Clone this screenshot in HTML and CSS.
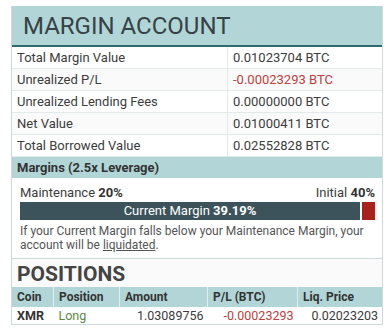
FILE: index.html
```html
<!DOCTYPE html>
<html lang="en">
<head>
  <meta charset="UTF-8">
  <meta name="viewport" content="width=device-width, initial-scale=1.0">
  <title>Margin Account</title>
  <link rel="stylesheet" href="styles.css">
</head>
<body>
  <div class="panel">
    <div class="panel-head">
      <h2>MARGIN ACCOUNT</h2>
    </div>

    <table class="summary">
      <tr><td>Total Margin Value</td><td>0.01023704 BTC</td></tr>
      <tr><td>Unrealized P/L</td><td class="neg">-0.00023293 BTC</td></tr>
      <tr><td>Unrealized Lending Fees</td><td>0.00000000 BTC</td></tr>
      <tr><td>Net Value</td><td>0.01000411 BTC</td></tr>
      <tr><td>Total Borrowed Value</td><td>0.02552828 BTC</td></tr>
    </table>

    <div class="sub-head">Margins (2.5x Leverage)</div>

    <div class="margins">
      <div class="margin-labels">
        <span>Maintenance <b>20%</b></span>
        <span>Initial <b>40%</b></span>
      </div>
      <div class="margin-bar">
        <div class="bar-fill">Current Margin <b>39.19%</b></div>
        <div class="bar-rest"></div>
      </div>
      <p class="note">If your Current Margin falls below your Maintenance Margin, your account will be <a href="#">liquidated</a>.</p>
    </div>

    <div class="positions-head">POSITIONS</div>

    <table class="positions">
      <thead>
        <tr>
          <th class="c-coin">Coin</th>
          <th class="c-pos">Position</th>
          <th class="c-amt">Amount</th>
          <th class="c-pl">P/L (BTC)</th>
          <th>Liq. Price</th>
        </tr>
      </thead>
      <tbody>
        <tr>
          <td class="coin">XMR</td>
          <td class="long">Long</td>
          <td class="num">1.03089756</td>
          <td class="num neg">-0.00023293</td>
          <td class="num">0.02023203</td>
        </tr>
      </tbody>
    </table>
  </div>
</body>
</html>
```

FILE: styles.css
```css
body {
  margin: 0;
  background-color: #fff;
  font-family: 'Roboto', 'Liberation Sans', sans-serif;
  color: #3a3a3a;
}
.panel {
  width: 370px;
  margin: 6px 0 0 11px;
  border: 1px solid #cdd9d9;
  border-top: none;
}
.panel-head {
  background-color: #b2d6d7;
  border-bottom: 2px solid #2c6b6f;
  height: 39px;
  padding-left: 11px;
}
.panel-head h2 {
  margin: 0;
  font-weight: normal;
  font-size: 24px;
  line-height: 40px;
  color: #374246;
}
table {
  border-collapse: collapse;
  width: 100%;
}
.summary td {
  font-size: 13px;
  height: 21px;
  padding: 0 5px;
  border-bottom: 1px solid #e4e9e9;
  color: #3c3c3c;
}
.summary td:first-child {
  width: 205px;
  border-right: 1px solid #e4e9e9;
}
.summary tr:nth-child(even) td {
  background-color: #fafafa;
}
.summary td.neg {
  color: #c0403c;
}
.sub-head {
  background-color: #b2d6d7;
  font-size: 13px;
  font-weight: bold;
  height: 21px;
  line-height: 21px;
  padding-left: 5px;
  color: #333;
}
.margins {
  padding: 7px 7px 6px 8px;
  border-bottom: 1px solid #cdd9d9;
}
.margin-labels {
  display: flex;
  justify-content: space-between;
  font-size: 13px;
  line-height: 16px;
  color: #3c3c3c;
}
.margin-labels b {
  color: #333;
}
.margin-bar {
  display: flex;
  gap: 2px;
  height: 18px;
  margin-top: 1px;
}
.bar-fill {
  flex: 1;
  background-color: #3d535b;
  color: #fff;
  font-size: 13px;
  line-height: 18px;
  text-align: center;
}
.bar-rest {
  width: 13px;
  background-color: #a8211c;
}
.note {
  margin: 4px 0 0;
  font-size: 12px;
  line-height: 14px;
  color: #555;
}
.note a {
  color: #555;
}
.positions-head {
  font-size: 21px;
  font-weight: bold;
  color: #444;
  height: 28px;
  line-height: 30px;
  padding-left: 5px;
  background-color: #fafafa;
}
.positions {
  table-layout: fixed;
}
.positions th {
  background-color: #b2d6d7;
  font-size: 12px;
  text-align: left;
  height: 20px;
  padding: 0 5px;
  color: #333;
  border-left: 1px solid #e4ecec;
}
.positions th:first-child {
  border-left: none;
}
.c-coin { width: 31px; }
.c-pos { width: 55px; }
.c-amt { width: 77px; }
.c-pl { width: 79px; }
.positions td {
  font-size: 12.5px;
  height: 17px;
  padding: 0 4px 0 5px;
  color: #3c3c3c;
}
.positions td.coin {
  font-weight: bold;
  color: #333;
}
.positions td.long {
  color: #5a8a3e;
}
.positions td.num {
  text-align: right;
}
.positions td.neg {
  color: #c0403c;
}
```
